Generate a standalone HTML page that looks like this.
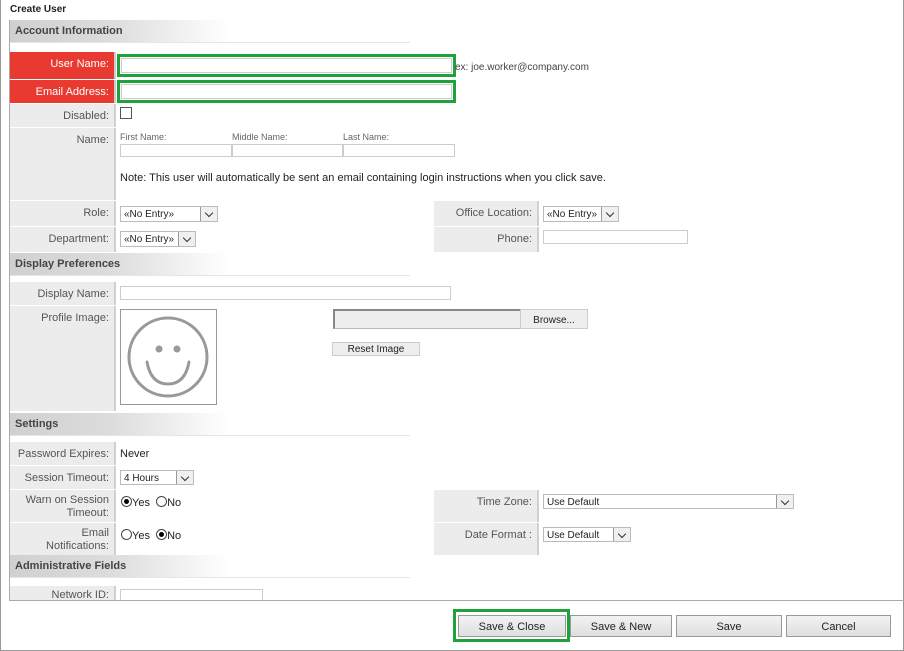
<!DOCTYPE html>
<html><head><meta charset="utf-8"><style>
*{box-sizing:border-box;margin:0;padding:0}
body{width:904px;height:651px;background:#fff;font-family:"Liberation Sans",Arial,sans-serif;position:relative;overflow:hidden;color:#222}
.a{position:absolute}
.frame{left:0;top:0;width:904px;height:651px;border:1px solid #999;border-top:none}
.panel{left:9px;top:20px;width:895px;height:581px;border-left:1px solid #aaa;border-bottom:1px solid #aaa}
.hdr{height:23px;background:linear-gradient(90deg,#d0d0d0 0%,#dcdcdc 25%,#fff 55%);font-weight:bold;font-size:11px;color:#444;padding:5px 0 0 5px;border-bottom:1px solid #e6e6e6}
.lbl{background:#ececec;border-right:2px solid #d0d0d0;font-size:11px;color:#555;text-align:right;padding:6px 5px 0 0;line-height:13px}
.red{background:#e93a32;color:#fff;border-right:2px solid #ccc}
.inp{border:1px solid #ccc;background:#fff}
.sel{border:1px solid #bbb;background:#fff;font-size:10px;padding:2px 3px;color:#222}
.sel i{position:absolute;right:0;top:0;bottom:0;width:17px;border-left:1px solid #999;background:#f0f0f0}
.sel i:after{content:"";position:absolute;left:5px;top:3px;width:5px;height:5px;border-right:1.5px solid #333;border-bottom:1.5px solid #333;transform:rotate(45deg)}
.t{font-size:11px;color:#222}
.btn{border:1px solid #999;background:linear-gradient(#f3f3f3,#dedede);font-size:11px;text-align:center;line-height:22px;color:#222}
.rad{display:inline-block;width:11px;height:11px;border:1px solid #444;border-radius:50%;vertical-align:-1px;position:relative}
.rad.on:after{content:"";position:absolute;left:2px;top:2px;width:5px;height:5px;border-radius:50%;background:#000}
.g{border:3px solid #1fa23b}
</style></head><body>
<div class="a frame"></div>
<div class="a" style="left:10px;top:4px;font-size:10px;font-weight:bold">Create User</div>
<div class="a panel"></div>

<div class="a hdr" style="left:10px;top:20px;width:400px">Account Information</div>
<div class="a lbl red" style="left:10px;top:52px;width:106px;height:27px">User Name:</div>
<div class="a lbl red" style="left:10px;top:80px;width:106px;height:23px">Email Address:</div>
<div class="a g" style="left:117px;top:54px;width:339px;height:23px"><div class="inp" style="margin:1px;height:15px"></div></div>
<div class="a g" style="left:117px;top:80px;width:339px;height:23px"><div class="inp" style="margin:1px;height:15px"></div></div>
<div class="a" style="left:455px;top:62px;font-size:10px;color:#444">ex: joe.worker@company.com</div>
<div class="a lbl" style="left:10px;top:104px;width:106px;height:23px">Disabled:</div>
<div class="a inp" style="left:120px;top:107px;width:12px;height:12px;border-color:#555"></div>
<div class="a lbl" style="left:10px;top:128px;width:106px;height:72px">Name:</div>
<div class="a" style="left:120px;top:132px;font-size:9px;color:#666">First Name:</div>
<div class="a" style="left:232px;top:132px;font-size:9px;color:#666">Middle Name:</div>
<div class="a" style="left:343px;top:132px;font-size:9px;color:#666">Last Name:</div>
<div class="a inp" style="left:120px;top:144px;width:112px;height:13px"></div>
<div class="a inp" style="left:232px;top:144px;width:111px;height:13px"></div>
<div class="a inp" style="left:343px;top:144px;width:112px;height:13px"></div>
<div class="a" style="left:120px;top:172px;font-size:11px">Note: This user will automatically be sent an email containing login instructions when you click save.</div>

<div class="a lbl" style="left:10px;top:201px;width:106px;height:25px">Role:</div>
<div class="a sel" style="left:120px;top:206px;width:98px;height:16px">«No Entry»<i></i></div>
<div class="a lbl" style="left:10px;top:227px;width:106px;height:25px">Department:</div>
<div class="a sel" style="left:120px;top:231px;width:76px;height:16px">«No Entry»<i></i></div>
<div class="a lbl" style="left:434px;top:201px;width:105px;height:25px">Office Location:</div>
<div class="a sel" style="left:543px;top:206px;width:76px;height:16px">«No Entry»<i></i></div>
<div class="a lbl" style="left:434px;top:227px;width:105px;height:25px">Phone:</div>
<div class="a inp" style="left:543px;top:230px;width:145px;height:14px"></div>

<div class="a hdr" style="left:10px;top:253px;width:400px">Display Preferences</div>
<div class="a lbl" style="left:10px;top:282px;width:106px;height:23px">Display Name:</div>
<div class="a inp" style="left:120px;top:286px;width:331px;height:14px"></div>
<div class="a lbl" style="left:10px;top:306px;width:106px;height:105px">Profile Image:</div>
<div class="a" style="left:120px;top:309px;width:97px;height:96px;border:1px solid #999">
<svg width="95" height="94" viewBox="0 0 95 94"><circle cx="47" cy="47" r="39" fill="none" stroke="#999" stroke-width="3"/><circle cx="38" cy="39" r="3.5" fill="#999"/><circle cx="56" cy="39" r="3.5" fill="#999"/><path d="M26 52 Q30 74 47 74 Q64 74 68 52" fill="none" stroke="#999" stroke-width="3" stroke-linecap="round"/></svg></div>
<div class="a" style="left:333px;top:309px;width:188px;height:20px;border:1px solid #bbb;border-top:2px solid #888;border-left:2px solid #888;background:#eee"></div>
<div class="a btn" style="left:520px;top:309px;width:68px;height:20px;line-height:22px;background:#eee;border-color:#ccc;font-size:10px">Browse...</div>
<div class="a btn" style="left:332px;top:342px;width:88px;height:14px;line-height:14px;background:#eee;border-color:#ccc;font-size:10px">Reset Image</div>

<div class="a hdr" style="left:10px;top:413px;width:400px">Settings</div>
<div class="a lbl" style="left:10px;top:442px;width:106px;height:23px">Password Expires:</div>
<div class="a t" style="left:120px;top:448px">Never</div>
<div class="a lbl" style="left:10px;top:466px;width:106px;height:23px">Session Timeout:</div>
<div class="a sel" style="left:120px;top:470px;width:74px;height:15px">4 Hours<i></i></div>
<div class="a lbl" style="left:10px;top:490px;width:106px;height:32px;padding-top:4px">Warn on Session<br>Timeout:</div>
<div class="a t" style="left:121px;top:496px"><span class="rad on"></span>Yes &nbsp;<span class="rad"></span>No</div>
<div class="a lbl" style="left:10px;top:523px;width:106px;height:32px;padding-top:4px">Email<br>Notifications:</div>
<div class="a t" style="left:121px;top:529px"><span class="rad"></span>Yes &nbsp;<span class="rad on"></span>No</div>
<div class="a lbl" style="left:434px;top:490px;width:105px;height:32px">Time Zone:</div>
<div class="a sel" style="left:543px;top:494px;width:251px;height:15px">Use Default<i></i></div>
<div class="a lbl" style="left:434px;top:523px;width:105px;height:32px">Date Format :</div>
<div class="a sel" style="left:543px;top:527px;width:88px;height:15px">Use Default<i></i></div>

<div class="a hdr" style="left:10px;top:555px;width:400px">Administrative Fields</div>
<div class="a lbl" style="left:10px;top:586px;width:106px;height:14px;padding-top:3px">Network ID:</div>
<div class="a inp" style="left:120px;top:589px;width:143px;height:11px;border-bottom:none"></div>

<div class="a g" style="left:453px;top:609px;width:117px;height:33px"></div>
<div class="a btn" style="left:458px;top:615px;width:108px;height:22px">Save &amp; Close</div>
<div class="a btn" style="left:570px;top:615px;width:102px;height:22px">Save &amp; New</div>
<div class="a btn" style="left:676px;top:615px;width:106px;height:22px">Save</div>
<div class="a btn" style="left:786px;top:615px;width:105px;height:22px">Cancel</div>
</body></html>
